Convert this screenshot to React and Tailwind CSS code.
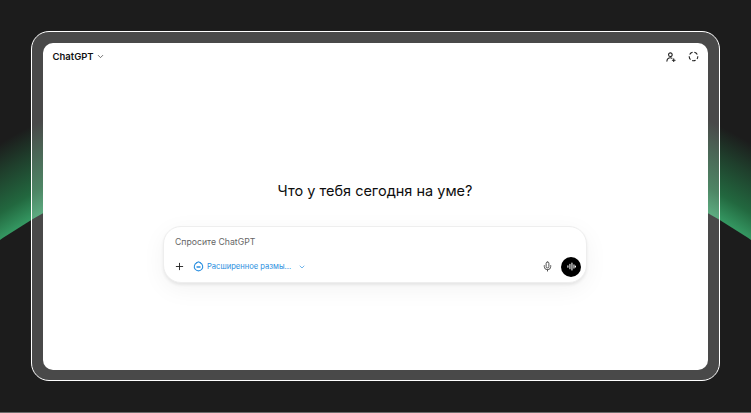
import React from "react";
import { ChevronDown, Plus, Mic } from "lucide-react";

// green glow behind the frame
function Glow() {
  return (
    <svg className="absolute inset-0" width="751" height="413" viewBox="0 0 751 413">
      <defs>
        <radialGradient id="glow" gradientUnits="userSpaceOnUse" cx="375.5" cy="790" r="748">
          <stop offset="0.885" stopColor="#38a068" />
          <stop offset="0.92" stopColor="#22683f" />
          <stop offset="0.965" stopColor="#1f3f2c" />
          <stop offset="1" stopColor="#1c1c1c" />
        </radialGradient>
      </defs>
      <circle cx="375.5" cy="790" r="748" fill="url(#glow)" />
      <circle cx="375.5" cy="790" r="666" fill="#1c1c1c" />
    </svg>
  );
}

function AddUserIcon() {
  return (
    <svg width="10" height="10" viewBox="0 0 11 11" fill="none" stroke="#222" strokeWidth="1.2" strokeLinecap="round">
      <circle cx="4.8" cy="3" r="2" />
      <path d="M1 10c.3-2.4 1.8-3.6 3.8-3.6 .7 0 1.2.1 1.7.4" />
      <path d="M8.5 7.5v3M7 9h3" />
    </svg>
  );
}

function DashedCircle() {
  return (
    <svg width="11" height="11" viewBox="0 0 11 11" fill="none" stroke="#222" strokeWidth="1.1">
      <circle cx="5.5" cy="5.5" r="4.3" strokeDasharray="3.6 1.8" strokeDashoffset="1" />
    </svg>
  );
}

function ThinkIcon() {
  return (
    <svg width="11" height="11" viewBox="0 0 11 11" fill="none" stroke="#2a8fe0" strokeWidth="1.1" strokeLinecap="round">
      <path d="M3.8 1.8a4.2 4.2 0 1 0 3.4 0" />
      <path d="M3.6 1.8L5.5.8 7.4 1.8" />
      <path d="M4 6h3" strokeWidth="1.3" />
    </svg>
  );
}

function VoiceIcon() {
  return (
    <svg width="9" height="9" viewBox="0 0 10 10" stroke="#fff" strokeWidth="1.2" strokeLinecap="round">
      <path d="M1 4.2v1.6M3.25 2.6v4.8M5.5 1.2v7.6M7.75 3.2v3.6M9.4 4.4v1.2" />
    </svg>
  );
}

function App() {
  return (
    <div className="relative h-[413px] w-[751px] overflow-hidden border-b border-[#6b6b6b] bg-[#1c1c1c] px-[31px] pt-[31px] font-['Inter',sans-serif]">
      <Glow />
      <div className="relative h-[350px] w-[689px] rounded-[18px] border-[1.5px] border-white bg-white/20 py-[10.5px] pl-[10.5px] pr-[11.5px]">
        <div className="flex h-full flex-col rounded-[10px] bg-white">
          {/* Header */}
          <div className="flex items-center justify-between pl-[10px] pr-[9px] pt-[7px]">
            <div className="flex items-center gap-[2px]">
              <span className="text-[9.5px] font-semibold leading-[14px] text-[#111]">ChatGPT</span>
              <ChevronDown size={9} color="#444" />
            </div>
            <div className="flex items-center gap-[12px]">
              <AddUserIcon />
              <DashedCircle />
            </div>
          </div>

          {/* Center */}
          <div className="flex flex-col items-center pt-[117px]">
            <h1 className="text-[14.5px] font-normal leading-[20px] text-[#0d0d0d]">Что у тебя сегодня на уме?</h1>
            <div className="mt-[25px] flex h-[57px] w-[424px] flex-col justify-between rounded-[18px] border border-[#eeeeee] bg-white pb-[5px] pl-[11px] pr-[5px] pt-[9px] shadow-[0_2px_3px_rgba(0,0,0,0.07),0_6px_24px_rgba(0,0,0,0.05)]">
              <div className="text-[8.7px] leading-[12px] text-[#666]">Спросите ChatGPT</div>
              <div className="flex items-center">
                <Plus size={11} color="#222" className="-ml-[1px]" />
                <div className="ml-[8px] flex items-center">
                  <ThinkIcon />
                  <span className="ml-[3px] text-[7.6px] leading-[10px] text-[#2a8fe0]">Расширенное размы...</span>
                  <ChevronDown size={8} color="#2a8fe0" className="ml-[7px]" />
                </div>
                <Mic size={11} color="#444" className="ml-auto mr-[8px]" />
                <div className="flex h-[20px] w-[20px] items-center justify-center rounded-full bg-black">
                  <VoiceIcon />
                </div>
              </div>
            </div>
          </div>
        </div>
      </div>
    </div>
  );
}

export default App;
